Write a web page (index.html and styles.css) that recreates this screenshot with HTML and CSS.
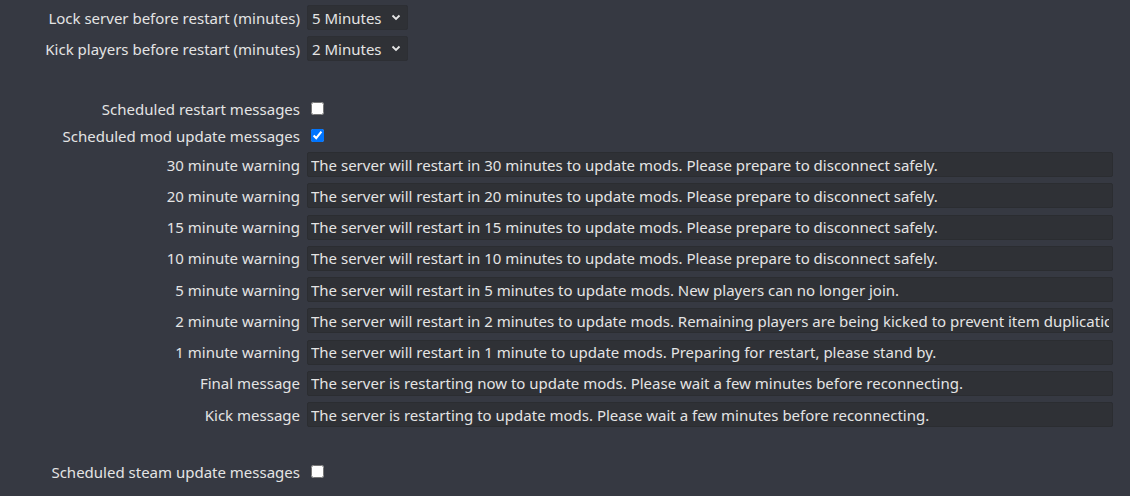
FILE: index.html
```html
<!DOCTYPE html>
<html lang="en">
<head>
    <meta charset="UTF-8">
    <title>Restart settings</title>
    <link rel="stylesheet" href="styles.css">
</head>
<body>

<div class="settings">
    <div class="row">
        <label class="label" for="lock">Lock server before restart (minutes)</label>
        <span class="select-wrap">
            <select id="lock" class="select">
                <option>5 Minutes</option>
                <option>10 Minutes</option>
            </select>
            <svg class="chevron" width="10" height="7" viewBox="0 0 10 7"><path d="M1.5 1.5 L5 5 L8.5 1.5" fill="none" stroke="#e6e6e6" stroke-width="1.8"/></svg>
        </span>
    </div>
    <div class="row">
        <label class="label" for="kick">Kick players before restart (minutes)</label>
        <span class="select-wrap">
            <select id="kick" class="select">
                <option>2 Minutes</option>
                <option>5 Minutes</option>
            </select>
            <svg class="chevron" width="10" height="7" viewBox="0 0 10 7"><path d="M1.5 1.5 L5 5 L8.5 1.5" fill="none" stroke="#e6e6e6" stroke-width="1.8"/></svg>
        </span>
    </div>

    <div class="row check-row spaced">
        <label class="label" for="restartMsg">Scheduled restart messages</label>
        <input type="checkbox" id="restartMsg" class="check">
    </div>
    <div class="row check-row">
        <label class="label" for="modMsg">Scheduled mod update messages</label>
        <input type="checkbox" id="modMsg" class="check" checked>
    </div>

    <div class="row msg-row">
        <label class="label">30 minute warning</label>
        <input type="text" class="text" value="The server will restart in 30 minutes to update mods. Please prepare to disconnect safely.">
    </div>
    <div class="row msg-row">
        <label class="label">20 minute warning</label>
        <input type="text" class="text" value="The server will restart in 20 minutes to update mods. Please prepare to disconnect safely.">
    </div>
    <div class="row msg-row">
        <label class="label">15 minute warning</label>
        <input type="text" class="text" value="The server will restart in 15 minutes to update mods. Please prepare to disconnect safely.">
    </div>
    <div class="row msg-row">
        <label class="label">10 minute warning</label>
        <input type="text" class="text" value="The server will restart in 10 minutes to update mods. Please prepare to disconnect safely.">
    </div>
    <div class="row msg-row">
        <label class="label">5 minute warning</label>
        <input type="text" class="text" value="The server will restart in 5 minutes to update mods. New players can no longer join.">
    </div>
    <div class="row msg-row">
        <label class="label">2 minute warning</label>
        <input type="text" class="text" value="The server will restart in 2 minutes to update mods. Remaining players are being kicked to prevent item duplication.">
    </div>
    <div class="row msg-row">
        <label class="label">1 minute warning</label>
        <input type="text" class="text" value="The server will restart in 1 minute to update mods. Preparing for restart, please stand by.">
    </div>
    <div class="row msg-row">
        <label class="label">Final message</label>
        <input type="text" class="text" value="The server is restarting now to update mods. Please wait a few minutes before reconnecting.">
    </div>
    <div class="row msg-row">
        <label class="label">Kick message</label>
        <input type="text" class="text" value="The server is restarting to update mods. Please wait a few minutes before reconnecting.">
    </div>

    <div class="row check-row spaced-end">
        <label class="label" for="steamMsg">Scheduled steam update messages</label>
        <input type="checkbox" id="steamMsg" class="check">
    </div>
</div>

</body>
</html>
```

FILE: styles.css
```css
body {
    margin: 0;
    background-color: #363942;
    color: #e4e4e4;
    font-family: 'Noto Sans', sans-serif;
    font-size: 15px;
    overflow: hidden;
}

.settings {
    padding: 2px 17px 0 0;
}

.row {
    display: grid;
    grid-template-columns: 300px 1fr;
    column-gap: 7px;
    align-items: center;
    height: 31px;
}

.check-row {
    height: 27px;
}

.msg-row {
    height: 31.25px;
}

.spaced {
    margin-top: 31px;
}

.spaced-end {
    margin-top: 28px;
}

.label {
    text-align: right;
    white-space: nowrap;
}

.select-wrap {
    position: relative;
    width: 101px;
}

.select {
    appearance: none;
    width: 101px;
    height: 25px;
    padding: 0 0 0 4px;
    border: 1px solid #2d2f34;
    border-radius: 2px;
    background-color: #2f3136;
    color: #e4e4e4;
    font-family: inherit;
    font-size: 15px;
}

.chevron {
    position: absolute;
    right: 7px;
    top: 9px;
    pointer-events: none;
}

.check {
    margin: 0 0 0 4px;
    width: 13px;
    height: 13px;
}

.text {
    height: 25px;
    box-sizing: border-box;
    padding: 0 3px;
    border: 1px solid #2b2d31;
    border-radius: 2px;
    background-color: #2f3136;
    color: #e4e4e4;
    font-family: inherit;
    font-size: 15px;
    outline: none;
}
```
